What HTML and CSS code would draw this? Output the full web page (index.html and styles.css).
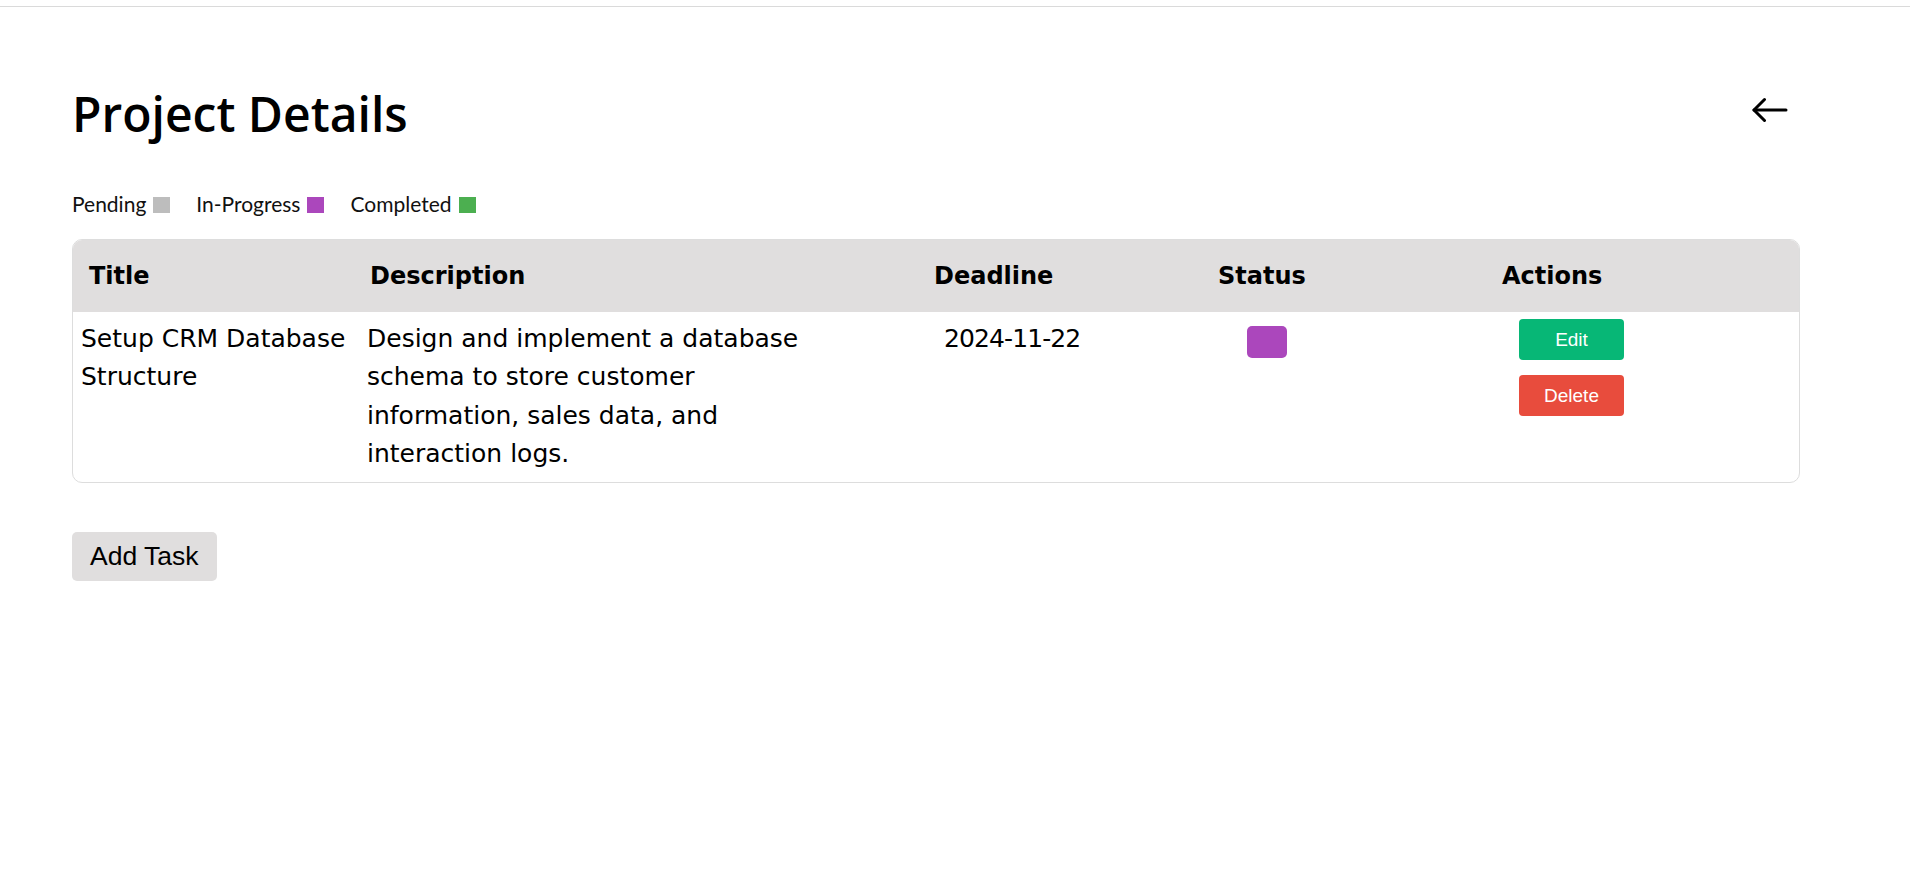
FILE: index.html
```html
<!DOCTYPE html>
<html lang="en">
<head>
<meta charset="utf-8">
<title>Project Details</title>
<link rel="stylesheet" href="styles.css">
</head>
<body>
<div class="topbar"></div>
<main class="page">
  <div class="title-row">
    <h1 class="page-title">Project Details</h1>
    <button class="back-btn" aria-label="Back">
      <svg width="36" height="26" viewBox="0 0 36 26" fill="none" stroke="#000" stroke-width="3" stroke-linecap="round" stroke-linejoin="round">
        <path d="M34 13H2"/>
        <path d="M12.5 2.5L2 13L12.5 23.5"/>
      </svg>
    </button>
  </div>

  <div class="legend">
    <span class="legend-item">Pending <span class="swatch swatch-pending"></span></span>
    <span class="legend-item">In-Progress <span class="swatch swatch-progress"></span></span>
    <span class="legend-item">Completed <span class="swatch swatch-done"></span></span>
  </div>

  <div class="task-table">
    <div class="thead">
      <div class="th">Title</div>
      <div class="th">Description</div>
      <div class="th">Deadline</div>
      <div class="th">Status</div>
      <div class="th">Actions</div>
    </div>
    <div class="trow">
      <div class="td td-title">Setup CRM Database Structure</div>
      <div class="td td-desc"><p class="desc-text">Design and implement a database schema to store customer information, sales data, and interaction logs.</p></div>
      <div class="td td-date">2024-11-22</div>
      <div class="td td-status"><span class="status-pill status-progress"></span></div>
      <div class="td td-actions">
        <button class="btn btn-edit">Edit</button>
        <button class="btn btn-delete">Delete</button>
      </div>
    </div>
  </div>

  <button class="add-btn">Add Task</button>
</main>
</body>
</html>
```

FILE: styles.css
```css
* { box-sizing: border-box; }

html, body {
  margin: 0;
  padding: 0;
  background: #ffffff;
}

body {
  font-family: "DejaVu Sans", "Noto Sans", sans-serif;
  color: #000;
}

.topbar {
  height: 7px;
  border-bottom: 1px solid #dadada;
}

.page {
  padding: 74px 110px 40px 72px;
}

.title-row {
  display: flex;
  justify-content: space-between;
  align-items: flex-start;
}

.page-title {
  margin: 0;
  font-family: "Open Sans", "Noto Sans", sans-serif;
  font-weight: 600;
  font-size: 48px;
  line-height: 65px;
  color: #000;
}

.back-btn {
  margin: 16px 12px 0 0;
  padding: 0;
  border: 0;
  background: transparent;
  width: 36px;
  height: 26px;
  display: block;
}

.back-btn svg { display: block; }

.legend {
  margin-top: 46px;
  display: flex;
  align-items: center;
  font-family: "Lato", "Noto Sans", sans-serif;
  font-size: 21px;
  line-height: 24px;
  color: #111;
}

.legend-item {
  display: inline-flex;
  align-items: center;
  gap: 7px;
  margin-right: 26px;
}

.swatch {
  display: inline-block;
  width: 17px;
  height: 16px;
  margin-top: 1px;
}

.swatch-pending { background: #bdbdbd; }
.swatch-progress { background: #ab47bc; }
.swatch-done { background: #4caf50; }

.task-table {
  margin-top: 23px;
  border: 1px solid #dddddd;
  border-radius: 10px;
  overflow: hidden;
}

.thead, .trow {
  display: grid;
  grid-template-columns: 281px 564px 284px 284px 313px;
}

.thead {
  background: #e0dede;
  height: 72px;
}

.th {
  padding: 21px 16px 0 16px;
  font-weight: bold;
  font-size: 24px;
  line-height: 30px;
}

.trow {
  font-size: 25px;
  line-height: 38.4px;
}

.td {
  padding: 8px 8px 8px 8px;
}

.td-title { padding-right: 0; }

.td-desc { padding-left: 13px; }

.desc-text {
  margin: 0;
  max-width: 460px;
}

.td-date {
  padding-left: 26px;
  letter-spacing: -0.9px;
}

.td-status { padding-left: 45px; }

.status-pill {
  display: block;
  width: 40px;
  height: 32px;
  margin-top: 6px;
  border-radius: 5px;
}

.status-progress { background: #ab47bc; }

.td-actions {
  padding-left: 33px;
  padding-top: 7px;
  display: flex;
  flex-direction: column;
  align-items: flex-start;
  gap: 15px;
}

.btn {
  width: 105px;
  height: 41px;
  border: 0;
  border-radius: 4px;
  color: #fff;
  font-family: "Liberation Sans", Arial, sans-serif;
  font-size: 19px;
  padding: 0;
}

.btn-edit { background: #07b776; }
.btn-delete { background: #e84c3d; }

.add-btn {
  margin-top: 49px;
  display: block;
  height: 49px;
  padding: 0 18px;
  border: 0;
  border-radius: 5px;
  background: #e0dede;
  color: #000;
  font-family: "Liberation Sans", Arial, sans-serif;
  font-size: 26.5px;
}
```
